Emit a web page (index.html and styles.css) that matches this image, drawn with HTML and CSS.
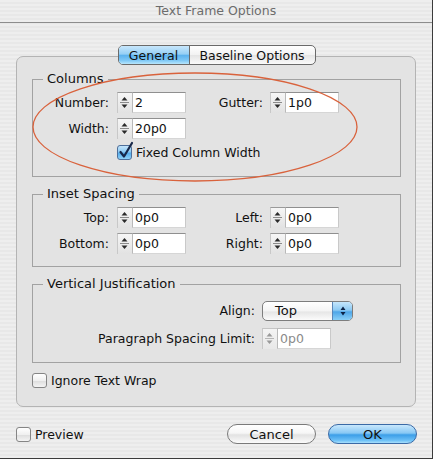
FILE: index.html
```html
<!DOCTYPE html>
<html>
<head>
<meta charset="utf-8">
<link rel="stylesheet" href="styles.css">
</head>
<body>
<svg class="defs" width="0" height="0">
  <defs>
    <symbol id="spin" viewBox="0 0 15 21">
      <path d="M4.5 8.5 L7.5 5 L10.5 8.5 Z" fill="#2a2a2a"/>
      <path d="M3 10.5 H12" stroke="#8a8a8a" stroke-width="1"/>
      <path d="M4.5 12.5 L7.5 16 L10.5 12.5 Z" fill="#2a2a2a"/>
    </symbol>
    <symbol id="spin-off" viewBox="0 0 15 21">
      <path d="M4.5 8.5 L7.5 5 L10.5 8.5 Z" fill="#9a9a9a"/>
      <path d="M3 10.5 H12" stroke="#b5b5b5" stroke-width="1"/>
      <path d="M4.5 12.5 L7.5 16 L10.5 12.5 Z" fill="#9a9a9a"/>
    </symbol>
  </defs>
</svg>
<div class="window">
  <div class="titlebar">Text Frame Options</div>
  <div class="main">
    <div class="panel">
      <div class="tabs">
        <div class="tab sel">General</div>
        <div class="tab">Baseline Options</div>
      </div>

      <fieldset class="group cols">
        <legend>Columns</legend>
        <div class="row">
          <span class="lbl l1">Number:</span>
          <span class="spin"><svg width="15" height="21"><use href="#spin"/></svg></span>
          <span class="field">2</span>
          <span class="lbl l2">Gutter:</span>
          <span class="spin"><svg width="15" height="21"><use href="#spin"/></svg></span>
          <span class="field">1p0</span>
        </div>
        <div class="row">
          <span class="lbl l1">Width:</span>
          <span class="spin"><svg width="15" height="21"><use href="#spin"/></svg></span>
          <span class="field">20p0</span>
        </div>
        <div class="checkrow indent">
          <span class="cb on">
            <svg width="18" height="20" viewBox="0 0 18 20"><path d="M3.5 11 L7 15.5 L15 2" fill="none" stroke="#18284a" stroke-width="2.2" stroke-linecap="round" stroke-linejoin="round"/></svg>
          </span>
          <span class="cbtext">Fixed Column Width</span>
        </div>
      </fieldset>

      <fieldset class="group inset">
        <legend>Inset Spacing</legend>
        <div class="row">
          <span class="lbl l1">Top:</span>
          <span class="spin"><svg width="15" height="21"><use href="#spin"/></svg></span>
          <span class="field">0p0</span>
          <span class="lbl l2">Left:</span>
          <span class="spin"><svg width="15" height="21"><use href="#spin"/></svg></span>
          <span class="field">0p0</span>
        </div>
        <div class="row">
          <span class="lbl l1">Bottom:</span>
          <span class="spin"><svg width="15" height="21"><use href="#spin"/></svg></span>
          <span class="field">0p0</span>
          <span class="lbl l2">Right:</span>
          <span class="spin"><svg width="15" height="21"><use href="#spin"/></svg></span>
          <span class="field">0p0</span>
        </div>
      </fieldset>

      <fieldset class="group vj">
        <legend>Vertical Justification</legend>
        <div class="row popuprow">
          <span class="lbl l3">Align:</span>
          <span class="popup">
            <span class="ptext">Top</span>
            <span class="parrow">
              <svg width="8" height="12" viewBox="0 0 8 12"><path d="M1.5 5 L4 1.5 L6.5 5Z M1.5 7 L4 10.5 L6.5 7Z" fill="#0b2347"/></svg>
            </span>
          </span>
        </div>
        <div class="row">
          <span class="lbl l3">Paragraph Spacing Limit:</span>
          <span class="spin off"><svg width="15" height="21"><use href="#spin-off"/></svg></span>
          <span class="field off">0p0</span>
        </div>
      </fieldset>

      <div class="checkrow wrap">
        <span class="cb"></span>
        <span class="cbtext">Ignore Text Wrap</span>
      </div>
    </div>

    <div class="footer">
      <div class="checkrow">
        <span class="cb"></span>
        <span class="cbtext">Preview</span>
      </div>
      <div class="buttons">
        <div class="btn">Cancel</div>
        <div class="btn default">OK</div>
      </div>
    </div>
  </div>
  <svg class="annot" width="433" height="459" viewBox="0 0 433 459">
    <ellipse cx="195" cy="127" rx="162" ry="54" fill="none" stroke="#d9623c" stroke-width="1.3"/>
  </svg>
</div>
</body>
</html>
```

FILE: styles.css
```css
* { box-sizing: border-box; }
html, body { margin: 0; padding: 0; }
body {
  font-family: "DejaVu Sans", "Liberation Sans", sans-serif;
  font-size: 12.5px;
  color: #111;
  background: #fff;
}
.defs { position: absolute; width: 0; height: 0; overflow: hidden; }

.window {
  position: relative;
  width: 433px;
  height: 459px;
  border-right: 1px solid #3c3c3c;
  border-bottom: 1px solid #3c3c3c;
  background: repeating-linear-gradient(to bottom, #eeeeee 0 2px, #e8e8e8 2px 4px);
  overflow: hidden;
}

.titlebar {
  height: 23px;
  border-bottom: 1px solid #8e8e8e;
  text-align: center;
  line-height: 22px;
  color: #6c6c6c;
  font-size: 12.5px;
}

.main {
  padding: 33px 16px 0 16px;
}

.panel {
  width: 400px;
  height: 351px;
  border: 1px solid #b4b4b4;
  border-radius: 7px;
  background: #e3e3e3;
  padding: 0 14px 0 15px;
}

.tabs {
  display: flex;
  width: 198px;
  height: 20px;
  margin: -12px auto 0;
  border: 1px solid #6a6a6a;
  border-radius: 5px;
  overflow: hidden;
  background: linear-gradient(#ffffff, #f2f2f2 50%, #e4e4e4 51%, #fafafa);
}
.tab {
  display: flex;
  align-items: center;
  justify-content: center;
  height: 100%;
  color: #111;
}
.tab.sel {
  width: 71px;
  border-right: 1px solid #6a6a6a;
  background: linear-gradient(#c8e7fc 0%, #95cff5 45%, #5cb2ee 52%, #7ec8f6 80%, #b7e6fd 100%);
}
.tab:not(.sel) { flex: 1; }

.group {
  margin: 0;
  min-width: 0;
  border: 1px solid #a2a2a2;
  padding: 0;
}
.group legend {
  margin-left: 10px;
  padding: 0 4px;
  line-height: 14px;
  font-size: 13px;
}
.cols { margin-top: 7px; padding-top: 6px; padding-bottom: 16px; }
.inset { margin-top: 10px; padding-top: 6px; padding-bottom: 12px; }
.vj { margin-top: 10px; padding-top: 9px; padding-bottom: 13px; }

.row {
  display: flex;
  align-items: center;
  height: 21px;
}
.row + .row { margin-top: 5px; }
.popuprow + .row { margin-top: 7px; }

.lbl { text-align: right; white-space: nowrap; }
.l1 { width: 76px; margin-right: 8px; }
.l2 { width: 77px; margin-right: 7px; }
.l3 { width: 222px; margin-right: 7px; }

.spin {
  display: block;
  width: 15px;
  height: 21px;
  border-top: 1px solid #9a9a9a;
  border-left: 1px solid #c8c8c8;
  background: linear-gradient(#f6f6f6, #e2e2e2);
}
.spin svg { display: block; margin: -1px 0 0 -1px; }
.field {
  display: flex;
  align-items: center;
  width: 54px;
  height: 21px;
  padding-left: 2px;
  background: #fff;
  border-top: 1px solid #8f8f8f;
  border-left: 1px solid #b9b9b9;
  border-right: 1px solid #c9c9c9;
  border-bottom: 1px solid #d6d6d6;
  color: #111;
}
.field.off { color: #8a8a8a; border-top-color: #bbbbbb; }
.spin.off { border-top-color: #c4c4c4; background: linear-gradient(#f4f4f4, #e8e8e8); }

.checkrow {
  display: flex;
  align-items: center;
  height: 15px;
}
.indent { margin-left: 84px; margin-top: 6px; }
.wrap { margin-top: 10px; }
.cb {
  position: relative;
  width: 15px;
  height: 15px;
  border: 1px solid #858585;
  border-radius: 3px;
  background: linear-gradient(#ffffff, #f0f0f0 50%, #dedede 55%, #f4f4f4);
  margin-right: 4px;
}
.cb.on {
  border-color: #4e6f9a;
  background: linear-gradient(#c3e4fb, #8dcaf3 45%, #54abea 55%, #8fd2f8);
}
.cb.on svg { position: absolute; left: -1px; top: -5px; }
.cbtext { white-space: nowrap; }

.popup {
  display: flex;
  width: 91px;
  height: 20px;
  border: 1px solid #7d7d7d;
  border-radius: 5px;
  overflow: hidden;
  background: linear-gradient(#ffffff, #f4f4f4 50%, #e6e6e6 55%, #fbfbfb);
}
.ptext { flex: 1; padding-left: 12px; line-height: 18px; font-size: 13px; }
.parrow {
  width: 20px;
  display: flex;
  align-items: center;
  justify-content: center;
  border-left: 1px solid #5a86b8;
  background: linear-gradient(#c5e6fc, #8dcaf3 45%, #4ea6e8 55%, #8ad0f8);
}

.footer {
  display: flex;
  align-items: center;
  height: 20px;
  margin-top: 17px;
}
.buttons { margin-left: auto; display: flex; gap: 12px; margin-right: -1px; }
.btn {
  width: 89px;
  height: 20px;
  border: 1px solid #7a7a7a;
  border-radius: 10px;
  display: flex;
  align-items: center;
  justify-content: center;
  background: linear-gradient(#ffffff, #f6f6f6 45%, #e2e2e2 55%, #fbfbfb);
  font-size: 13px;
}
.btn.default {
  border-color: #3b6aa6;
  background: linear-gradient(#c9e8fd, #88c8f4 45%, #3c9ee8 55%, #6cc0f6 85%, #a8e0fd);
}

.annot { position: absolute; left: 0; top: 0; pointer-events: none; }
```
